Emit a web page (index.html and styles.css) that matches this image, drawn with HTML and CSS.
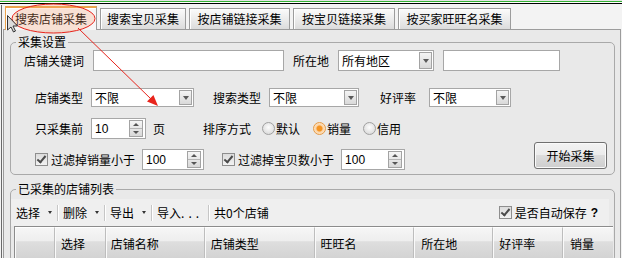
FILE: index.html
```html
<!DOCTYPE html>
<html lang="zh-CN">
<head>
    <meta charset="UTF-8">
    <meta name="viewport" content="width=device-width, initial-scale=1.0">
    <title>店铺采集</title>
    <link rel="stylesheet" href="styles.css">
</head>
<body>
    <div class="topbar"></div>
    <div class="frame">
        <div class="tabs">
            <div class="tab active t1">搜索店铺采集</div>
            <div class="tab t2">搜索宝贝采集</div>
            <div class="tab t3">按店铺链接采集</div>
            <div class="tab t4">按宝贝链接采集</div>
            <div class="tab t5">按买家旺旺名采集</div>
        </div>

        <div class="panel">
            <fieldset class="group settings">
                <legend>采集设置</legend>

                <div class="row r1">
                    <span class="lbl">店铺关键词</span>
                    <div class="box w191"></div>
                    <span class="lbl">所在地</span>
                    <div class="combo w96"><span class="txt">所有地区</span><span class="drop"></span></div>
                    <div class="box w117"></div>
                </div>

                <div class="row r2">
                    <span class="lbl">店铺类型</span>
                    <div class="combo w103"><span class="txt">不限</span><span class="drop"></span></div>
                    <span class="lbl ml19">搜索类型</span>
                    <div class="combo w90"><span class="txt">不限</span><span class="drop"></span></div>
                    <span class="lbl ml21 mr13">好评率</span>
                    <div class="combo w82"><span class="txt">不限</span><span class="drop"></span></div>
                </div>

                <div class="row r3">
                    <span class="lbl">只采集前</span>
                    <div class="spin w55"><span class="val">10</span><span class="arrows"><i class="up"></i><i class="down"></i></span></div>
                    <span class="ml7">页</span>
                    <span class="lbl ml38 mr11">排序方式</span>
                    <label class="opt"><span class="radio"></span>默认</label>
                    <label class="opt ml13"><span class="radio on"></span>销量</label>
                    <label class="opt ml12"><span class="radio"></span>信用</label>
                </div>

                <div class="row r4">
                    <label class="chk"><span class="check"></span>过滤掉销量小于</label>
                    <div class="spin w62 ml7"><span class="val">100</span><span class="arrows"><i class="up"></i><i class="down"></i></span></div>
                    <label class="chk ml18"><span class="check"></span>过滤掉宝贝数小于</label>
                    <div class="spin w64 ml7"><span class="val">100</span><span class="arrows"><i class="up"></i><i class="down"></i></span></div>
                    <div class="btn">开始采集</div>
                </div>
            </fieldset>

            <fieldset class="group list">
                <legend>已采集的店铺列表</legend>

                <div class="toolbar">
                    <span class="tool">选择<i class="caret"></i></span>
                    <span class="sep"></span>
                    <span class="tool">删除<i class="caret"></i></span>
                    <span class="sep"></span>
                    <span class="tool">导出<i class="caret"></i></span>
                    <span class="sep"></span>
                    <span class="tool imp">导入<span class="dots">...</span></span>
                    <span class="sep"></span>
                    <span class="tool">共0个店铺</span>
                    <label class="chk autosave"><span class="check"></span>是否自动保存<b>?</b></label>
                </div>

                <div class="grid">
                    <div class="th c1"></div>
                    <div class="th c2">选择</div>
                    <div class="th c3">店铺名称</div>
                    <div class="th c4">店铺类型</div>
                    <div class="th c5">旺旺名</div>
                    <div class="th c6">所在地</div>
                    <div class="th c7">好评率</div>
                    <div class="th c8">销量</div>
                </div>
            </fieldset>
        </div>
    </div>

    <!-- annotation drawn over the screenshot -->
    <svg class="marks" width="622" height="258" viewBox="0 0 622 258">
        <ellipse cx="53.5" cy="18.5" rx="41.5" ry="14.5" fill="rgba(255,160,110,0.25)" stroke="#e8241c" stroke-width="1"/>
        <line x1="78" y1="28" x2="151" y2="99" stroke="#e8241c" stroke-width="1"/>
        <polygon points="158,106 147,101.4 153.4,95" fill="#e8241c"/>
        <path d="M7.5 15.5 L7.5 30 L11 27 L13.5 32 L15.5 31 L13 26 L17.5 26 Z" fill="#dcdcdc" stroke="#333" stroke-width="1" stroke-linejoin="round"/>
    </svg>
</body>
</html>
```

FILE: styles.css
```css
* {
    box-sizing: border-box;
}

body {
    margin: 0;
    width: 622px;
    height: 258px;
    overflow: hidden;
    position: relative;
    background-color: #f3f3f3;
    color: #000;
    font-family: "Noto Sans CJK SC", sans-serif;
    font-size: 12px;
    line-height: 14px;
}

.topbar {
    height: 5px;
    background: linear-gradient(#e6e6e6 0 1px, #34b234 1px 2px, #fff 2px 3px, #000 3px 4px, #f3f3f3 4px 5px);
}

.frame {
    margin-left: 1px;
    border-left: 1px solid #6a6a6a;
    height: 253px;
}

/* tabs */
.tabs {
    display: flex;
    align-items: flex-end;
    gap: 3px;
    height: 24px;
    padding-left: 3px;
}
.tab {
    height: 21px;
    border: 1px solid #9c9c9c;
    border-bottom: none;
    background: linear-gradient(#fbfbfb, #ececec 50%, #dcdcdc);
    box-shadow: inset 1px 1px 0 #fff;
    text-align: center;
    line-height: 19px;
    white-space: nowrap;
}
.tab.active {
    position: relative;
    z-index: 1;
    height: 24px;
    margin-bottom: -1px;
    background: #f6f6f6;
    border-color: #eba24a #9c9c9c #9c9c9c #eba24a;
    border-top-width: 2px;
    line-height: 21px;
}
.t1 { width: 92px; }
.t2 { width: 86px; }
.t3 { width: 101px; }
.t4 { width: 102px; }
.t5 { width: 113px; }

.panel {
    margin-left: 1px;
    width: 618px;
    height: 229px;
    overflow: hidden;
    border: 1px solid #9c9c9c;
    border-bottom: none;
    background-color: #e9e9e9;
    padding: 5px 0 0 6px;
}

/* group boxes */
.group {
    margin: 0;
    padding: 0;
    width: 605px;
    border: 1px solid #a9a9a9;
    border-radius: 5px;
}
.group legend {
    margin-left: 5px;
    padding: 0 2px;
    line-height: 14px;
}
.settings {
    padding-bottom: 4px;
}
.list {
    margin-top: 7px;
    height: 80px;
}

.row {
    display: flex;
    align-items: center;
}
.r1 {
    height: 21px;
    margin-top: 1px;
    padding-left: 13px;
    gap: 9px;
}
.r2 {
    height: 19px;
    margin-top: 17px;
    padding-left: 24px;
}
.r3 {
    height: 21px;
    margin-top: 11px;
    padding-left: 24px;
}
.r4 {
    height: 28px;
    margin-top: 3px;
    padding-left: 24px;
    align-items: flex-end;
}
.r2 .lbl, .r3 .lbl {
    margin-right: 8px;
}
.r2 .mr13 { margin-right: 13px; }
.r3 .mr11 { margin-right: 11px; }

.lbl {
    white-space: nowrap;
}
.ml7 { margin-left: 7px; }
.ml12 { margin-left: 12px; }
.ml13 { margin-left: 13px; }
.ml18 { margin-left: 18px; }
.ml19 { margin-left: 19px; }
.ml21 { margin-left: 21px; }
.ml38 { margin-left: 38px; }

.w55 { width: 55px; }
.w62 { width: 62px; }
.w64 { width: 64px; }
.w82 { width: 82px; }
.w90 { width: 90px; }
.w96 { width: 96px; }
.w103 { width: 103px; }
.w117 { width: 117px; }
.w191 { width: 191px; }

/* inputs */
.box, .combo, .spin {
    height: 100%;
    border: 1px solid #a7a7a7;
    background-color: #fff;
}
.combo, .spin {
    display: flex;
    align-items: center;
}
.txt {
    flex: 1;
    padding-left: 3px;
    white-space: nowrap;
}
.drop {
    align-self: stretch;
    width: 13px;
    margin: 1px;
    border: 1px solid #a3a3a3;
    background: linear-gradient(#f4f4f4, #d9d9d9);
    display: flex;
    align-items: center;
    justify-content: center;
}
.drop::after {
    content: "";
    border-top: 4px solid #5a5a5a;
    border-left: 3px solid transparent;
    border-right: 3px solid transparent;
}

.spin {
    height: 21px;
}
.val {
    flex: 1;
    padding-left: 3px;
    font-family: "Liberation Sans", sans-serif;
    font-size: 12px;
}
.arrows {
    align-self: stretch;
    width: 14px;
    margin: 1px 2px 1px 0;
    display: flex;
    flex-direction: column;
    border: 1px solid #a3a3a3;
    background: linear-gradient(#f6f6f6, #d8d8d8);
}
.arrows i {
    flex: 1;
    display: flex;
    align-items: center;
    justify-content: center;
}
.arrows .up {
    border-bottom: 1px solid #b5b5b5;
}
.arrows .up::after {
    content: "";
    border-bottom: 3px solid #555;
    border-left: 3px solid transparent;
    border-right: 3px solid transparent;
}
.arrows .down::after {
    content: "";
    border-top: 3px solid #555;
    border-left: 3px solid transparent;
    border-right: 3px solid transparent;
}

/* radios and checkboxes */
.opt {
    display: flex;
    align-items: center;
    gap: 1px;
}
.radio {
    width: 13px;
    height: 13px;
    border-radius: 50%;
    border: 1px solid #a0a0a0;
    background: radial-gradient(circle at 50% 40%, #fdfdfd, #d2d2d2);
}
.radio.on {
    border-color: #e59a44;
    background: radial-gradient(circle, #f59422 0 2.5px, #fbd2a2 3.5px, #fdf3e8);
}

.chk {
    display: flex;
    align-items: center;
    gap: 3px;
    height: 21px;
    white-space: nowrap;
}
.check {
    position: relative;
    width: 13px;
    height: 13px;
    border: 1px solid #8e8e8e;
    background: linear-gradient(#dcdcdc, #f2f2f2);
}
.check::after {
    content: "";
    position: absolute;
    left: 3px;
    top: 0;
    width: 3px;
    height: 7px;
    border-right: 2px solid #4a4a4a;
    border-bottom: 2px solid #4a4a4a;
    transform: rotate(40deg);
}

.btn {
    margin-left: auto;
    margin-right: 7px;
    margin-bottom: 1px;
    width: 73px;
    height: 27px;
    border: 1px solid #707070;
    border-radius: 3px;
    background: linear-gradient(#f3f3f3 0, #ebebeb 50%, #dcdcdc 50%, #cecece 100%);
    box-shadow: inset 0 0 0 1px #fafafa;
    text-align: center;
    line-height: 25px;
}

/* list toolbar */
.toolbar {
    display: flex;
    align-items: center;
    height: 27px;
    margin-top: 3px;
    margin-right: 5px;
    padding-right: 11px;
    background-color: #efefef;
}
.tool {
    display: flex;
    align-items: center;
    gap: 8px;
    padding: 0 5px;
    white-space: nowrap;
}
.tool.imp {
    width: 56px;
}
.dots {
    letter-spacing: 4px;
    margin-left: -8px;
}
.caret {
    border-top: 3px solid #333;
    border-left: 2.5px solid transparent;
    border-right: 2.5px solid transparent;
}
.sep {
    width: 1px;
    height: 16px;
    background-color: #c6c6c6;
    box-shadow: 1px 0 0 #fff;
}
.autosave {
    margin-left: auto;
}
.autosave b {
    font-family: "Liberation Sans", sans-serif;
    font-weight: bold;
    margin-left: 1px;
}

/* table header */
.grid {
    display: flex;
    margin-left: 3px;
    width: 599px;
    border-top: 1px solid #8c8c8c;
    border-left: 1px solid #8c8c8c;
}
.th {
    height: 31px;
    padding: 9px 0 0 6px;
    border-right: 1px solid #bdbdbd;
    border-top: 1px solid #fff;
    background: linear-gradient(#f6f6f6 0, #eeeeee 42%, #dedede 46%, #d3d3d3 100%);
    box-shadow: inset 1px 0 0 #fafafa;
    white-space: nowrap;
}
.c1 { width: 40px; }
.c2 { width: 51px; }
.c3 { width: 99px; padding-left: 5px; }
.c4 { width: 110px; }
.c5 { width: 100px; }
.c6 { width: 79px; padding-left: 7px; }
.c7 { width: 70px; }
.c8 { width: 50px; padding-left: 7px; border-right: none; }

.marks {
    position: absolute;
    z-index: 2;
    left: 0;
    top: 0;
    pointer-events: none;
}
```
